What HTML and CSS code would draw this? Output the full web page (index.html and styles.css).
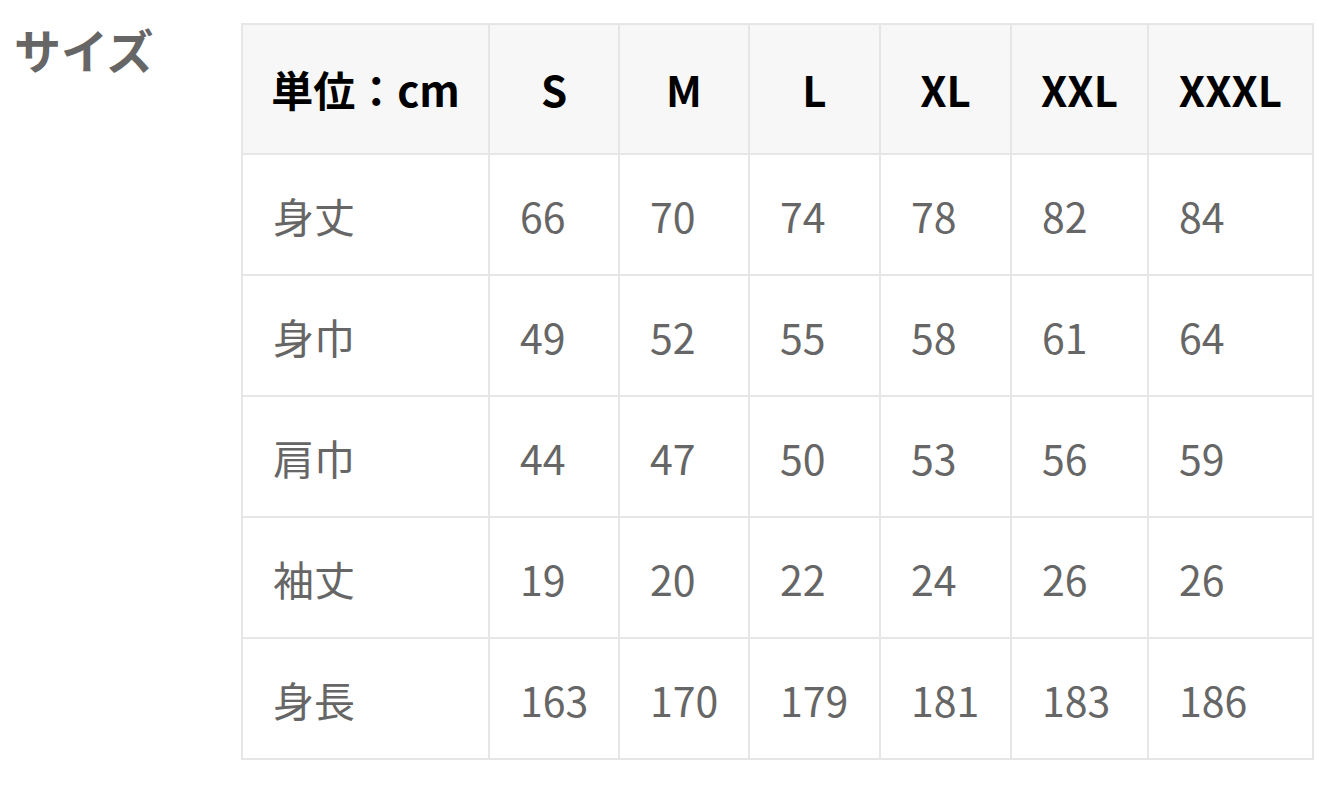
FILE: index.html
```html
<!DOCTYPE html>
<html lang="ja">
<head>
<meta charset="utf-8">
<link rel="stylesheet" href="styles.css">
</head>
<body>
<div class="page">
  <h2 class="title">サイズ</h2>
  <table class="size-table">
    <colgroup>
      <col class="c0"><col class="c1"><col class="c2"><col class="c3"><col class="c4"><col class="c5"><col class="c6">
    </colgroup>
    <thead>
      <tr><th>単位：cm</th><th>S</th><th>M</th><th>L</th><th>XL</th><th>XXL</th><th>XXXL</th></tr>
    </thead>
    <tbody>
      <tr><td>身丈</td><td>66</td><td>70</td><td>74</td><td>78</td><td>82</td><td>84</td></tr>
      <tr><td>身巾</td><td>49</td><td>52</td><td>55</td><td>58</td><td>61</td><td>64</td></tr>
      <tr><td>肩巾</td><td>44</td><td>47</td><td>50</td><td>53</td><td>56</td><td>59</td></tr>
      <tr><td>袖丈</td><td>19</td><td>20</td><td>22</td><td>24</td><td>26</td><td>26</td></tr>
      <tr><td>身長</td><td>163</td><td>170</td><td>179</td><td>181</td><td>183</td><td>186</td></tr>
    </tbody>
  </table>
</div>
</body>
</html>
```

FILE: styles.css
```css
html, body {
  margin: 0;
  padding: 0;
  background: #ffffff;
}
body {
  font-family: "Noto Sans CJK JP", "Noto Sans", sans-serif;
}
.page {
  display: flex;
  align-items: flex-start;
  padding: 23px 0 0 14px;
}
.title {
  width: 227px;
  flex: none;
  margin: 0;
  font-size: 47px;
  line-height: 52px;
  font-weight: 700;
  color: #666666;
}
.size-table {
  border-collapse: collapse;
  table-layout: fixed;
  width: 1071px;
  border: 2px solid #e6e6e6;
}
.c0 { width: 247px; }
.c1 { width: 130px; }
.c2 { width: 130px; }
.c3 { width: 131px; }
.c4 { width: 131px; }
.c5 { width: 137px; }
.c6 { width: 165px; }
.size-table th,
.size-table td {
  border: 2px solid #e6e6e6;
  padding: 0 0 0 30px;
  line-height: 48px;
  white-space: nowrap;
}
.size-table th {
  height: 128px;
  background: #f7f7f7;
  color: #000000;
  font-size: 42px;
  font-weight: 700;
  text-align: center;
  padding: 0;
}
.size-table td {
  height: 119px;
  color: #666666;
  font-size: 41px;
  font-weight: 400;
  text-align: left;
}
```
